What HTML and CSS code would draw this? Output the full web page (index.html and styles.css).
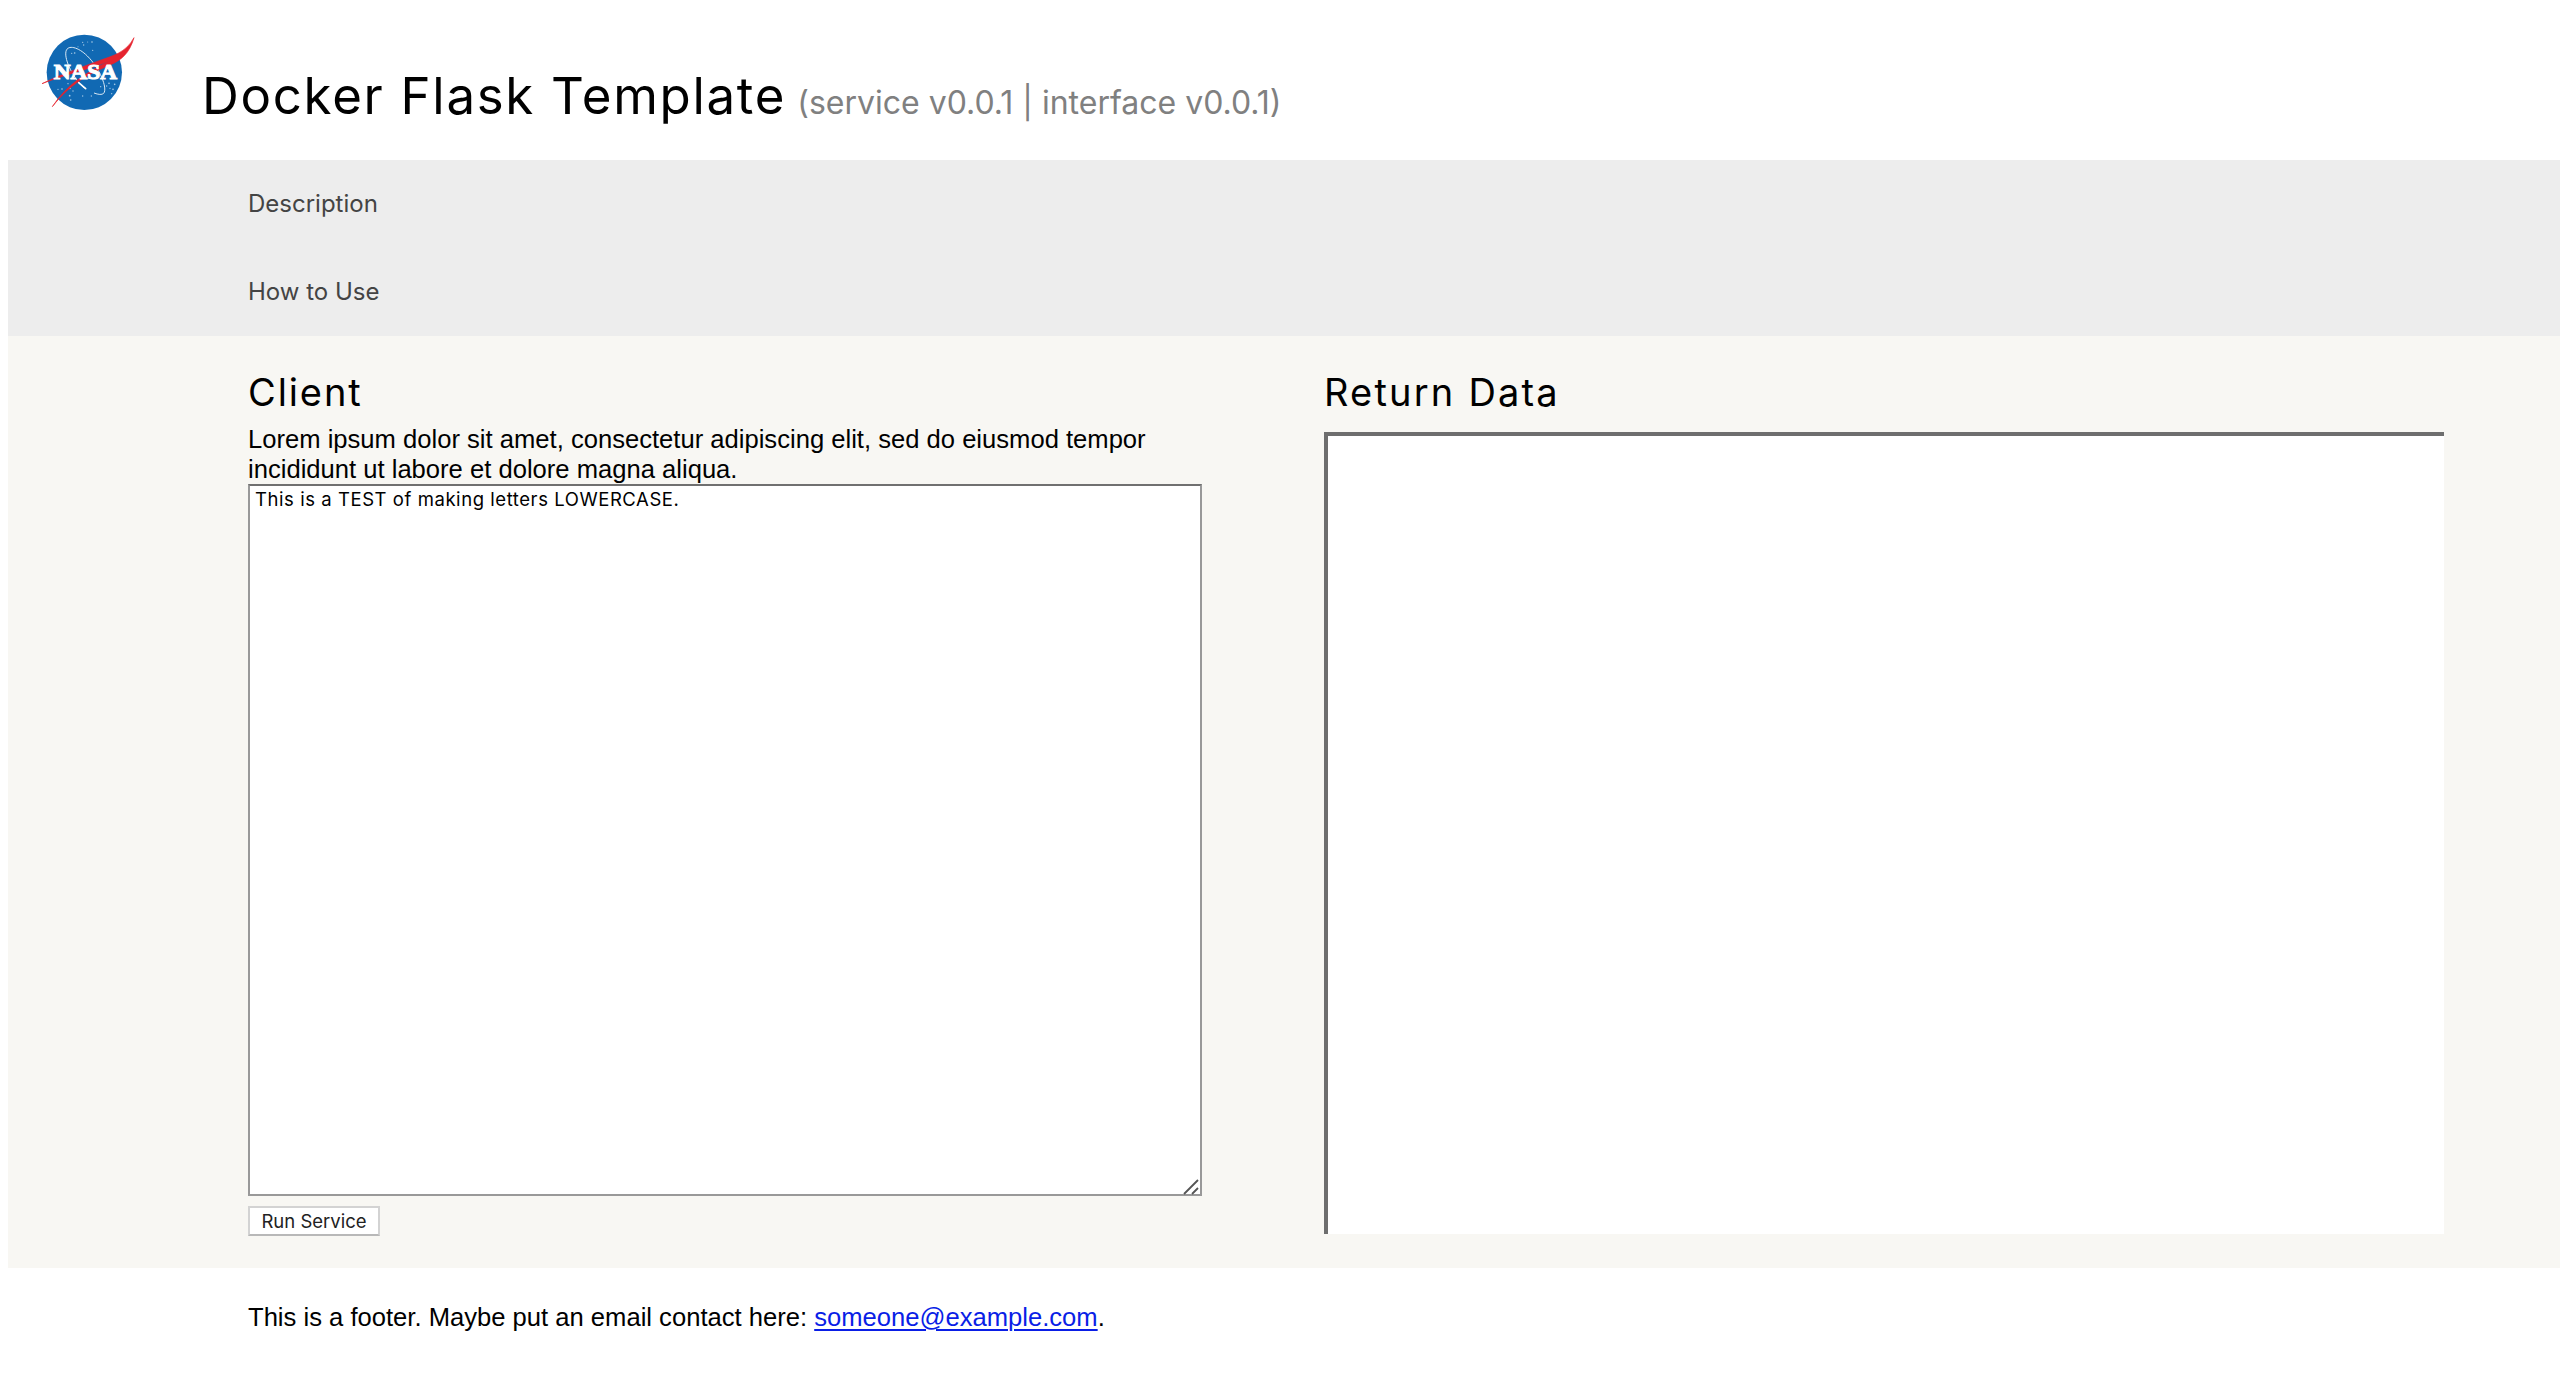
FILE: index.html
```html
<!DOCTYPE html>
<html lang="en">
<head>
<meta charset="utf-8">
<title>Docker Flask Template</title>
<link rel="stylesheet" href="styles.css">
</head>
<body>
<header class="header">
  <svg class="logo" viewBox="0 0 312 270" role="img" aria-label="NASA">
    <circle cx="145" cy="133" r="113" fill="#1169b3"/>
    <g fill="#a9cbe6">
      <circle cx="140" cy="43" r="2"/><circle cx="155" cy="42" r="1.5"/><circle cx="168" cy="42" r="2.5"/><circle cx="143" cy="51" r="2"/><circle cx="170" cy="67" r="2"/><circle cx="126" cy="56" r="1.5"/><circle cx="107" cy="76" r="2"/><circle cx="116" cy="75" r="2.5"/><circle cx="78" cy="183" r="2.5"/><circle cx="96" cy="167" r="2"/><circle cx="102" cy="181" r="2.5"/><circle cx="101" cy="203" r="2.5"/><circle cx="104" cy="216" r="2.5"/><circle cx="66" cy="184" r="2"/><circle cx="111" cy="189" r="2"/><circle cx="140" cy="204" r="2"/><circle cx="166" cy="204" r="2"/><circle cx="219" cy="166" r="2.5"/><circle cx="222" cy="181" r="2"/><circle cx="236" cy="169" r="2.5"/><circle cx="231" cy="184" r="2.5"/><circle cx="227" cy="197" r="2"/><circle cx="212" cy="174" r="2"/><circle cx="194" cy="176" r="2"/>
    </g>
    <path d="M145 181C114 153 84 97 90 70C95 49 127 57 154 84C190 119 216 181 203 196C198 201 187 200 174 195" fill="none" stroke="#d8e8f4" stroke-width="3"/>
    <path d="M128 164L149 182" stroke="#fff" stroke-width="5" stroke-linecap="round"/>
    <path d="M18 167C75 139 126 122 181 101C231 83 269 75 294 29C280 77 256 96 222 111C157 139 104 166 49 236C92 170 151 133 221 99C156 125 92 138 18 167Z" fill="#e5232e" stroke="#e5232e" stroke-width="2"/>
    <text class="logo-text" x="53" y="153" textLength="190" lengthAdjust="spacingAndGlyphs">NASA</text>
  </svg>
  <h1 class="title">Docker Flask Template <span class="version">(service v0.0.1 | interface v0.0.1)</span></h1>
</header>
<nav class="nav">
  <div class="nav-item">Description</div>
  <div class="nav-item">How to Use</div>
</nav>
<main class="main">
  <section class="client">
    <h2 class="heading">Client</h2>
    <p class="intro">Lorem ipsum dolor sit amet, consectetur adipiscing elit, sed do eiusmod tempor incididunt ut labore et dolore magna aliqua.</p>
    <div class="field">
      <textarea class="input" spellcheck="false">This is a TEST of making letters LOWERCASE.</textarea>
      <svg class="grip" viewBox="0 0 16 16"><path d="M1 15L15 1M9 15L15 9" fill="none" stroke="#555" stroke-width="1.8"/></svg>
    </div>
    <button class="run" type="button">Run Service</button>
  </section>
  <section class="result">
    <h2 class="heading heading-result">Return Data</h2>
    <div class="output"></div>
  </section>
</main>
<footer class="footer">This is a footer. Maybe put an email contact here: <a class="mail" href="#">someone@example.com</a>.</footer>
</body>
</html>
```
FILE: styles.css
```css
* { box-sizing: border-box; }

body {
  margin: 0;
  background: #fff;
  color: #000;
  font-family: "Liberation Sans", Helvetica, Arial, sans-serif;
  font-size: 25.6px;
  line-height: 30px;
}

.header { display: flex; height: 160px; }
.logo { width: 104px; height: 90px; margin: 28px 0 0 36px; }
.logo-text {
  font: bold 62px "Liberation Serif", serif;
  fill: #fff;
  stroke: #fff;
  stroke-width: 3;
}
.title {
  margin: 64px 0 0 62px;
  font: 430 51px/64px Inter, sans-serif;
  letter-spacing: 1.7px;
}
.version {
  margin-left: -5px;
  font-size: 32px;
  letter-spacing: 0;
  color: #808080;
}

.nav {
  margin-left: 8px;
  padding-left: 240px;
  background: #ededed;
  color: #444;
  font: 24px/88px Inter, sans-serif;
}
.nav-item { height: 88px; }

.main {
  display: grid;
  grid-template-columns: 954px 1120px;
  column-gap: 122px;
  height: 932px;
  margin-left: 8px;
  padding: 32px 0 0 240px;
  background: #f8f7f3;
}
.heading {
  margin: 0;
  font: 430 38px/48px Inter, sans-serif;
  letter-spacing: 1.9px;
}
.heading-result { letter-spacing: 2.2px; }
.intro { margin: 8px 0 0; }

.field { position: relative; height: 712px; }
.input {
  display: block;
  width: 100%;
  height: 100%;
  padding: 8px 5px;
  border: 2px solid #999;
  border-top-color: #707070;
  border-radius: 0;
  background: #fff;
  color: #000;
  font: 18.5px/24px Inter, sans-serif;
  letter-spacing: 0.56px;
  resize: none;
  outline: none;
}
.input { padding-top: 1px; }
.grip {
  position: absolute;
  right: 3px;
  bottom: 1px;
  width: 16px;
  height: 16px;
}
.run {
  display: block;
  width: 132px;
  height: 30px;
  margin-top: 10px;
  padding: 0;
  border: 2px solid #d3d3d3;
  border-bottom-color: #b8b8b8;
  background: #fff;
  color: #222;
  font: 18.5px/26px Inter, sans-serif;
}

.output {
  height: 802px;
  margin-top: 16px;
  border-top: 4px solid #6e6e6e;
  border-left: 4px solid #6e6e6e;
  background: #fff;
}

.footer { padding: 34px 0 0 248px; }
.mail { color: #0a1ee6; text-decoration-thickness: 2px; text-underline-offset: 3px; }
```
